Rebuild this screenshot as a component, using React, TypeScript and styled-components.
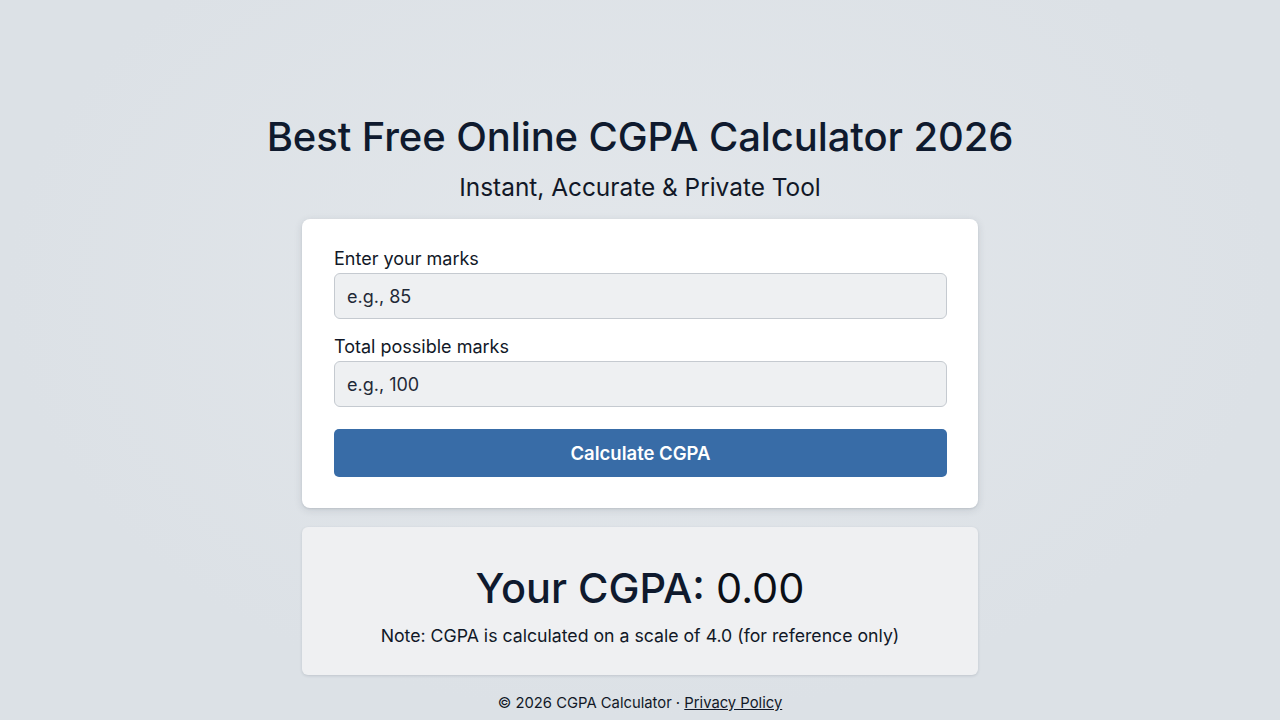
import React from "react";
import styled, { createGlobalStyle } from "styled-components";

const Global = createGlobalStyle`
  html, body { margin: 0; padding: 0; }
  body {
    background: #dde2e7;
    font-family: Inter, "Noto Sans", sans-serif;
    color: #0f1a2e;
  }
`;

const Page = styled.main`
  min-height: 720px;
  display: flex;
  flex-direction: column;
  align-items: center;
  padding-top: 113px;
  box-sizing: border-box;
  background: radial-gradient(ellipse at 50% 40%, #e3e7eb 0%, #dce1e6 70%);
`;

const Title = styled.h1`
  margin: 0;
  font-size: 40px;
  line-height: 48px;
  font-weight: 500;
  color: #0f1a2e;
  letter-spacing: -0.1px;
`;

const Subtitle = styled.p`
  margin: 11px 0 0;
  font-size: 24.4px;
  line-height: 30px;
  font-weight: 400;
  color: #111827;
`;

const Card = styled.section`
  margin-top: 17px;
  width: 676px;
  box-sizing: border-box;
  background: #ffffff;
  border-radius: 8px;
  box-shadow: 0 2px 8px rgba(30, 40, 60, 0.12), 0 1px 2px rgba(30, 40, 60, 0.1);
  padding: 29px 31px 31px 32px;
  display: flex;
  flex-direction: column;
`;

const Label = styled.label`
  font-size: 18px;
  line-height: 22px;
  color: #111827;
  margin-bottom: 3px;
`;

const Input = styled.input<{ $gap?: boolean }>`
  height: 46px;
  box-sizing: border-box;
  border: 1px solid #c5cad0;
  border-radius: 6px;
  background: #eef0f2;
  padding: 0 12px;
  font-family: inherit;
  font-size: 18px;
  color: #111827;
  margin-bottom: ${(p) => (p.$gap ? "17px" : "0")};
  &::placeholder { color: #1f2937; }
`;

const Button = styled.button`
  margin-top: 22px;
  height: 48px;
  border: none;
  border-radius: 5px;
  background: #386ca7;
  color: #ffffff;
  font-family: inherit;
  font-size: 18.5px;
  font-weight: 600;
  cursor: pointer;
`;

const Result = styled.section`
  margin-top: 19px;
  width: 676px;
  height: 148px;
  box-sizing: border-box;
  background: #eff0f2;
  border-radius: 6px;
  box-shadow: 0 1px 3px rgba(30, 40, 60, 0.15);
  display: flex;
  flex-direction: column;
  align-items: center;
  justify-content: center;
  padding-top: 8px;
`;

const Score = styled.h2`
  margin: 0;
  font-size: 41.5px;
  line-height: 52px;
  font-weight: 500;
  color: #0f1a2e;
  span { color: #0b0f16; font-weight: 400; }
`;

const Note = styled.p`
  margin: 10px 0 0;
  font-size: 17.7px;
  line-height: 24px;
  color: #111827;
`;

const Footer = styled.footer`
  margin-top: 18px;
  font-size: 14.8px;
  line-height: 20px;
  color: #111827;
  a { color: #111827; text-decoration: underline; }
`;

export default function App() {
  return (
    <>
      <Global />
      <Page>
        <Title>Best Free Online CGPA Calculator 2026</Title>
        <Subtitle>Instant, Accurate &amp; Private Tool</Subtitle>
        <Card>
          <Label htmlFor="marks">Enter your marks</Label>
          <Input id="marks" placeholder="e.g., 85" $gap />
          <Label htmlFor="total">Total possible marks</Label>
          <Input id="total" placeholder="e.g., 100" />
          <Button>Calculate CGPA</Button>
        </Card>
        <Result>
          <Score>
            Your CGPA: <span>0.00</span>
          </Score>
          <Note>Note: CGPA is calculated on a scale of 4.0 (for reference only)</Note>
        </Result>
        <Footer>
          © 2026 CGPA Calculator · <a href="#">Privacy Policy</a>
        </Footer>
      </Page>
    </>
  );
}
